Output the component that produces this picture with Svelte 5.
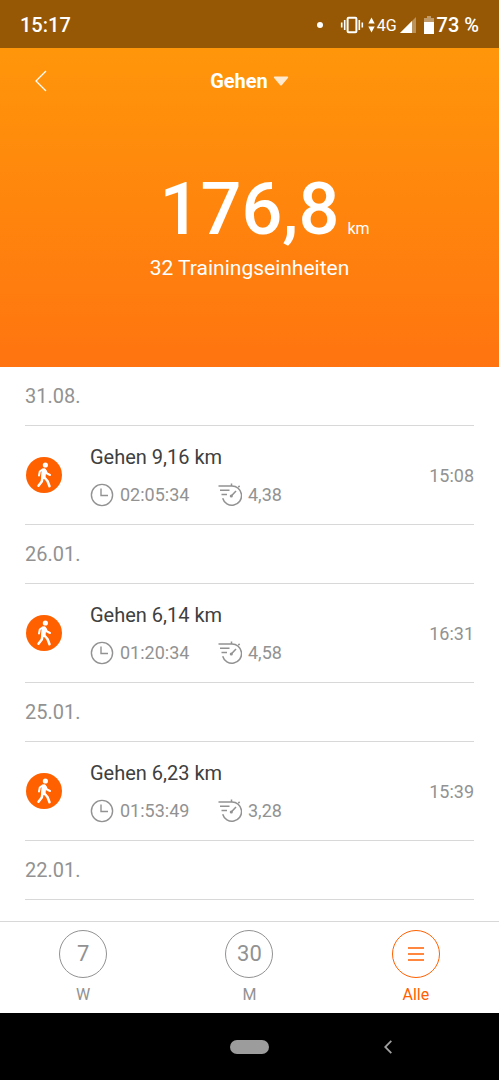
<!--App.svelte - walking history with totals, training list and period tabs-->
<script lang="ts">
    type Training = { distance: string; duration: string; speed: string; time: string };
    type Day = { date: string; trainings: Training[] };

    let days: Day[] = $state([
        { date: '31.08.', trainings: [{ distance: '9,16', duration: '02:05:34', speed: '4,38', time: '15:08' }] },
        { date: '26.01.', trainings: [{ distance: '6,14', duration: '01:20:34', speed: '4,58', time: '16:31' }] },
        { date: '25.01.', trainings: [{ distance: '6,23', duration: '01:53:49', speed: '3,28', time: '15:39' }] },
        { date: '22.01.', trainings: [] }
    ]);

    const tabs = [
        { id: 'week', badge: '7', label: 'W' },
        { id: 'month', badge: '30', label: 'M' },
        { id: 'all', badge: '', label: 'Alle' }
    ];
    let activeTab: string = $state('all');
</script>

<div class="screen">
    <div class="status-bar">
        <span class="clock">15:17</span>
        <span class="dot"></span>
        <svg class="vibrate" width="24" height="18" viewBox="0 0 24 18" fill="none" stroke="#fff" stroke-width="1.6">
            <rect x="7.6" y="1.8" width="8.8" height="14.4" rx="1" stroke-width="2" />
            <path d="M4.7 4v10M1.7 6.500v5M19.300 4v10M22.300 6.500v5" />
        </svg>
        <svg class="arrows" width="7" height="16" viewBox="0 0 7 16" fill="#fff">
            <path d="M3.500 0.500L6.700 6.500H0.300zM3.500 15.500L6.700 9.500H0.300z" />
        </svg>
        <span class="network">4G</span>
        <svg class="signal" width="16" height="16" viewBox="0 0 16 16">
            <path d="M0 16L16 0v16z" fill="#fff" opacity="0.35" />
            <path d="M0 16L12 4v12z" fill="#fff" />
        </svg>
        <svg class="battery" width="10" height="18" viewBox="0 0 10 18">
            <path d="M3 0h4v2h3v4H0V2h3z" fill="#fff" opacity="0.4" />
            <path d="M0 6h10v12H0z" fill="#fff" />
        </svg>
        <span class="percent">73 %</span>
    </div>

    <header>
        <div class="toolbar">
            <button class="back" aria-label="Zurück">
                <svg width="14" height="22" viewBox="0 0 14 22" fill="none" stroke="#fff" stroke-width="1.3">
                    <path d="M12 1L2 11l10 10" />
                </svg>
            </button>
            <button class="activity">
                Gehen
                <svg width="16" height="10" viewBox="0 0 16 10" fill="#fff" opacity="0.8">
                    <path d="M1.500 0.500h13q1.300 0.300 0.400 1.500L9 9Q8 10 7 9L1.100 2Q0.200 0.800 1.500 0.500z" />
                </svg>
            </button>
        </div>
        <div class="total">
            <span class="number">176,8</span>
            <span class="unit">km</span>
        </div>
        <p class="count">32 Trainingseinheiten</p>
    </header>

    <main>
        {#each days as day}
            <h2>{day.date}</h2>
            {#each day.trainings as training}
                <article>
                    <svg class="walker" width="36" height="36" viewBox="0 0 36 36">
                        <circle cx="18" cy="18" r="18" fill="#ff6000" />
                        <circle cx="19.400" cy="8" r="2.600" fill="#fff" />
                        <g fill="none" stroke="#fff" stroke-linecap="round" stroke-linejoin="round">
                            <path d="M18 13.500L17.300 19.500" stroke-width="4.600" />
                            <path d="M16.500 12.500L13.800 14.500L13 18.500M19.500 13.500L21 16.500L24 18" stroke-width="2" />
                            <path d="M16.500 20.500L15.800 24.500L12.500 28.800M18 20L21.500 24L23.500 29.300" stroke-width="2.500" />
                        </g>
                    </svg>
                    <div class="details">
                        <h3>Gehen {training.distance} km</h3>
                        <div class="stats">
                            <span class="stat duration">
                                <svg width="24" height="24" viewBox="0 0 24 24" fill="none" stroke="#929292" stroke-width="1.400">
                                    <circle cx="12" cy="12" r="10.600" />
                                    <path d="M11 5.500V12.500h7" />
                                </svg>
                                {training.duration}
                            </span>
                            <span class="stat">
                                <svg width="24" height="24" viewBox="0 0 24 24" fill="none" stroke="#929292" stroke-width="1.500">
                                    <path d="M0.500 3H13.500A9.600 9.600 0 1 1 4.700 15.200" />
                                    <path d="M2 7.200h9.500M3.500 11.500h5.500M13.500 0.500v2.500M20.300 4.200l1.300-1.300" />
                                    <path d="M13.500 12.800L18 8" />
                                    <circle cx="13.300" cy="13" r="0.800" fill="#929292" />
                                </svg>
                                {training.speed}
                            </span>
                        </div>
                    </div>
                    <time>{training.time}</time>
                </article>
            {/each}
        {/each}
    </main>

    <nav class="tabs">
        {#each tabs as tab}
            <button class:active={activeTab === tab.id} onclick={() => (activeTab = tab.id)}>
                <span class="circle">
                    {#if tab.badge}
                        {tab.badge}
                    {:else}
                        <svg width="16" height="14" viewBox="0 0 16 14" stroke="currentColor" stroke-width="1.300">
                            <path d="M0 1h16M0 7h16M0 13h16" />
                        </svg>
                    {/if}
                </span>
                {tab.label}
            </button>
        {/each}
    </nav>

    <div class="system-nav">
        <button class="home" aria-label="Startseite"></button>
        <button class="system-back" aria-label="Zurück">
            <svg width="8" height="14" viewBox="0 0 8 14" fill="none" stroke="#a0a0a0" stroke-width="1.800">
                <path d="M7.300 0.800L1.200 7l6.100 6.200" />
            </svg>
        </button>
    </div>
</div>

<style>
    :global(body) {
        margin: 0;
        background: #fff;
    }

    .screen {
        display: flex;
        flex-direction: column;
        min-height: 100vh;
        font-family: Roboto, "Liberation Sans", sans-serif;
        color: #929292;
    }

    button {
        padding: 0;
        border: none;
        background: none;
        color: inherit;
        font: inherit;
        cursor: pointer;
    }

    svg {
        flex: none;
    }

    h2, h3, p {
        margin: 0;
        font-weight: 400;
    }

    .status-bar {
        display: flex;
        align-items: center;
        height: 48px;
        padding: 2px 20px 0;
        box-sizing: border-box;
        background: #965805;
        color: #fff;
        font-size: 20px;
        font-weight: 500;
    }

    .clock {
        margin-right: auto;
    }

    .dot {
        width: 6px;
        height: 6px;
        margin-right: 17px;
        border-radius: 50%;
        background: #fff;
    }

    .vibrate {
        margin-right: 4px;
    }

    .arrows {
        margin-right: 2px;
    }

    .network {
        margin-right: 3px;
        font-size: 16px;
        font-weight: 400;
    }

    .signal {
        margin-right: 8px;
    }

    .battery {
        margin-right: 3px;
    }

    header {
        height: 319px;
        background: linear-gradient(#ff960a, #ff7410);
        color: #fff;
        text-align: center;
    }

    .toolbar {
        display: grid;
        grid-template-columns: 1fr auto 1fr;
        align-items: center;
        height: 66px;
        padding: 0 34px;
    }

    .back {
        display: flex;
        justify-self: start;
    }

    .activity {
        display: flex;
        align-items: center;
        gap: 5px;
        font-size: 20px;
        font-weight: 700;
    }

    .total {
        display: grid;
        grid-template-columns: 1fr auto 1fr;
        align-items: baseline;
        padding-top: 52px;
    }

    .number {
        grid-column: 2;
        font-size: 72px;
        font-weight: 500;
        line-height: 88px;
    }

    .unit {
        padding-left: 8px;
        font-size: 16px;
        text-align: left;
    }

    .count {
        padding-top: 2px;
        font-size: 21px;
        line-height: 24px;
    }

    main {
        flex: 1;
        padding: 0 25px;
    }

    h2 {
        border-bottom: 1px solid #d8d8d8;
        font-size: 20px;
        line-height: 58px;
    }

    article {
        display: flex;
        align-items: center;
        height: 98px;
        border-bottom: 1px solid #d8d8d8;
    }

    .walker {
        margin: 0 28px 0 1px;
    }

    .details {
        flex: 1;
        padding-top: 2px;
    }

    h3 {
        color: #404040;
        font-size: 20px;
        line-height: 24px;
    }

    .stats {
        display: flex;
        margin-top: 14px;
        font-size: 18px;
        line-height: 24px;
    }

    .stat {
        display: flex;
        align-items: center;
        gap: 6px;
    }

    .duration {
        width: 128px;
    }

    time {
        font-size: 18px;
    }

    .tabs {
        display: grid;
        grid-template-columns: repeat(3, 1fr);
        height: 92px;
        box-sizing: border-box;
        border-top: 1px solid #d8d8d8;
    }

    .tabs button {
        display: flex;
        flex-direction: column;
        align-items: center;
        padding-top: 8px;
        gap: 7px;
        font-size: 16px;
        line-height: 20px;
    }

    .tabs .active {
        color: #ff6000;
    }

    .circle {
        display: flex;
        align-items: center;
        justify-content: center;
        width: 46px;
        height: 46px;
        border: 1px solid;
        border-radius: 50%;
        font-size: 22px;
    }

    .system-nav {
        display: grid;
        grid-template-columns: repeat(9, 1fr);
        align-items: center;
        justify-items: center;
        height: 67px;
        background: #000;
    }

    .home {
        grid-column: 5;
        width: 39px;
        height: 14px;
        border-radius: 7px;
        background: #9c9c9c;
    }

    .system-back {
        display: flex;
        grid-column: 7 / 9;
    }
</style>
